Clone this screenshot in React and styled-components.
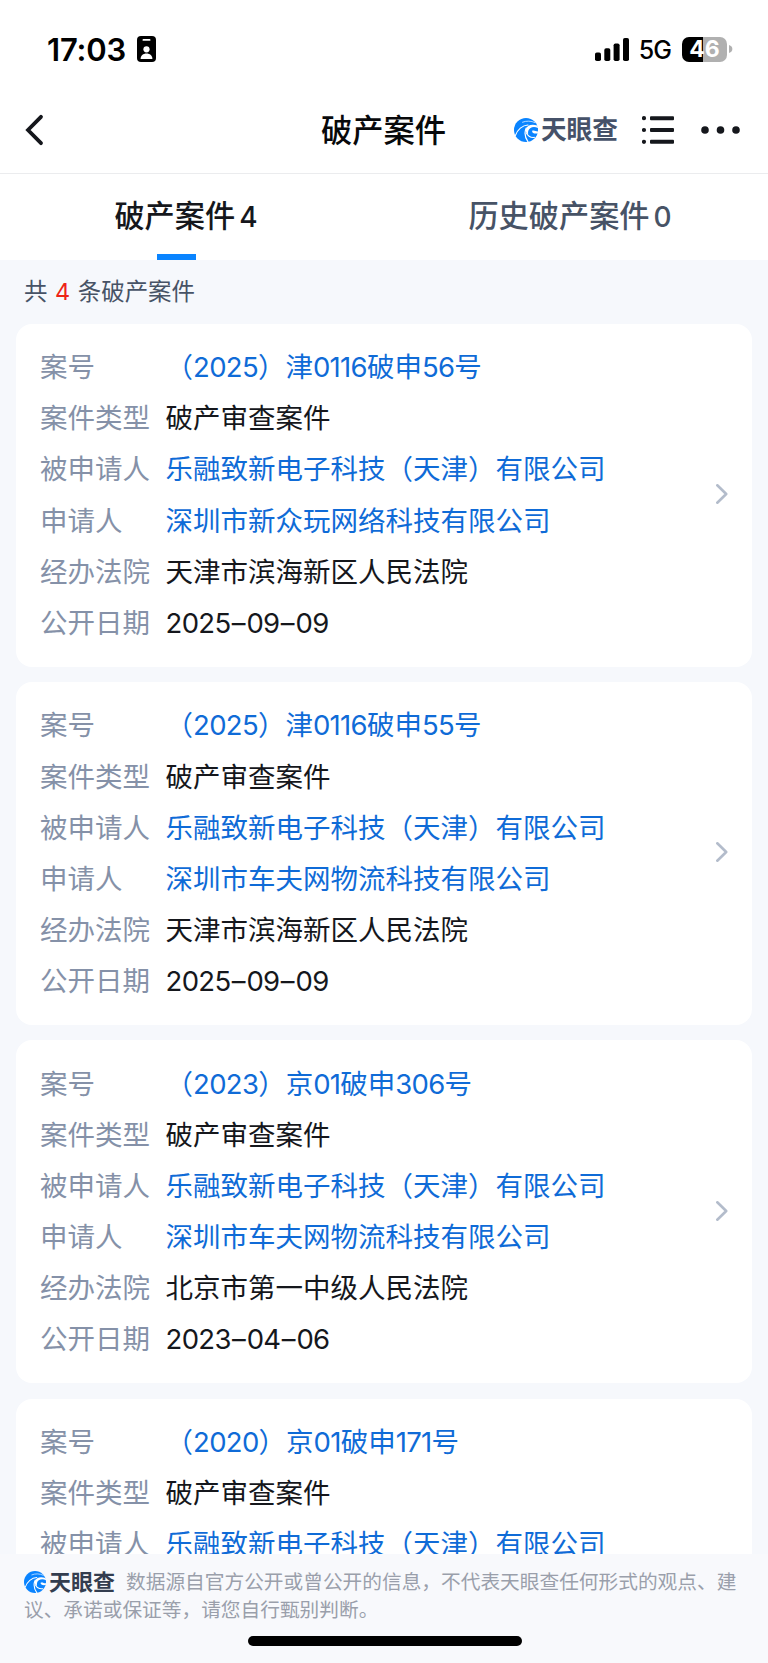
import React from "react";
import styled, { createGlobalStyle } from "styled-components";

const CASES = [
  {
    no: "（2025）津0116破申56号",
    applicant: "深圳市新众玩网络科技有限公司",
    court: "天津市滨海新区人民法院",
    date: "2025–09–09",
  },
  {
    no: "（2025）津0116破申55号",
    applicant: "深圳市车夫网物流科技有限公司",
    court: "天津市滨海新区人民法院",
    date: "2025–09–09",
  },
  {
    no: "（2023）京01破申306号",
    applicant: "深圳市车夫网物流科技有限公司",
    court: "北京市第一中级人民法院",
    date: "2023–04–06",
  },
  {
    no: "（2020）京01破申171号",
  },
];

// digits are set tighter than the Chinese glyphs around them
function Mixed({ text }) {
  return text
    .split(/([0-9]+|–)/)
    .filter(Boolean)
    .map((part, i) => {
      if (part === "–") return <Dash key={i}>{part}</Dash>;
      if (/[0-9]/.test(part)) return <Digits key={i}>{part}</Digits>;
      return <span key={i}>{part}</span>;
    });
}

function LogoMark({ size }) {
  return (
    <svg width={size} height={size} viewBox="0 0 24 24">
      <circle cx="12" cy="12" r="12" fill="#0a84ff" />
      <g fill="none" stroke="#fff" strokeLinecap="round">
        <path d="M8.5 4.2C12.5 2.6 17 2.8 21 4.6" strokeWidth="0.7" />
        <path d="M1.4 17.5C3.4 11.6 8.4 7.2 14 7" strokeWidth="1.1" />
        <path d="M12.2 10C10.2 14.4 11 19.4 14 23.8" strokeWidth="1.2" />
        <path d="M12.4 15C13.8 18 17 19.8 20.4 19.4" strokeWidth="1.1" />
      </g>
      <path d="M11.8 11C13.4 7 18 5.8 23.4 7.6L24.2 10.2C21.4 8.6 18.4 8.6 16.2 10.2C14.2 11.6 13.8 14 14.2 16.4C12 15 11.2 13 11.8 11Z" fill="#fff" />
      <path d="M24.4 13.4C21.6 13.4 20.4 12 18.4 12.6C17.4 14.4 19.4 16 23.6 15.4Z" fill="#fff" />
    </svg>
  );
}

function StatusBar() {
  return (
    <Status>
      <Clock>
        17:03
        <svg width="19" height="26" viewBox="0 0 19 26">
          <rect width="19" height="26" rx="4" fill="#000" />
          <rect x="5.5" y="3" width="8" height="1.8" rx="0.9" fill="#fff" />
          <circle cx="9.5" cy="13.3" r="3.1" fill="#fff" />
          <path d="M3.6 23C3.6 19.7 6 17.6 9.5 17.6S15.4 19.7 15.4 23Z" fill="#fff" />
        </svg>
      </Clock>
      <Signals>
        <svg width="34" height="23" viewBox="0 0 34 23">
          <rect x="0" y="14.5" width="6" height="8.5" rx="1.8" />
          <rect x="9.3" y="10.3" width="6" height="12.7" rx="1.8" />
          <rect x="18.6" y="5.4" width="6" height="17.6" rx="1.8" />
          <rect x="28" y="0" width="6" height="23" rx="1.8" />
        </svg>
        <Network>5G</Network>
        <Battery>46</Battery>
        <svg width="4" height="8" viewBox="0 0 4 8">
          <path d="M0 0C4.5 1.2 4.5 6.8 0 8Z" fill="#b0b0b0" />
        </svg>
      </Signals>
    </Status>
  );
}

function CaseCard({ item }) {
  return (
    <Card>
      <Fields>
        <Label>案号</Label>
        <Value $link><Mixed text={item.no} /></Value>
        <Label>案件类型</Label>
        <Value>破产审查案件</Value>
        <Label>被申请人</Label>
        <Value $link>乐融致新电子科技（天津）有限公司</Value>
        {item.applicant && (
          <>
            <Label>申请人</Label>
            <Value $link>{item.applicant}</Value>
            <Label>经办法院</Label>
            <Value>{item.court}</Value>
            <Label>公开日期</Label>
            <Value><Mixed text={item.date} /></Value>
          </>
        )}
      </Fields>
      <Arrow width="12" height="20" viewBox="0 0 12 20">
        <path d="M1.3 1.3L10.2 10L1.3 18.7" fill="none" stroke="#b3bccb" strokeWidth="2.6" strokeLinecap="round" strokeLinejoin="round" />
      </Arrow>
    </Card>
  );
}

export default function App() {
  return (
    <Screen>
      <GlobalStyle />
      <StatusBar />
      <NavBar>
        <svg width="20" height="32" viewBox="0 0 20 32">
          <path d="M17 2.8L4 16L17 29.2" fill="none" stroke="#15171c" strokeWidth="3.8" strokeLinecap="round" />
        </svg>
        <Title>破产案件</Title>
        <NavActions>
          <LogoMark size={24} />
          <Brand>天眼查</Brand>
          <svg width="32" height="28" viewBox="0 0 32 28" fill="#15171c">
            <circle cx="2" cy="2.2" r="2.1" />
            <circle cx="2" cy="14" r="2.1" />
            <circle cx="2" cy="25.8" r="2.1" />
            <rect x="8" y="0.2" width="24" height="4" rx="1" />
            <rect x="8" y="12" width="24" height="4" rx="1" />
            <rect x="8" y="23.8" width="24" height="4" rx="1" />
          </svg>
          <More width="39" height="8" viewBox="0 0 39 8" fill="#15171c">
            <circle cx="4" cy="4" r="3.8" />
            <circle cx="19.5" cy="4" r="3.8" />
            <circle cx="35" cy="4" r="3.8" />
          </More>
        </NavActions>
      </NavBar>
      <Tabs>
        <Tab $active>
          <TabText>破产案件<Count>4</Count></TabText>
        </Tab>
        <Tab>
          <TabText>历史破产案件<Count>0</Count></TabText>
        </Tab>
      </Tabs>
      <Summary>
        共 <em>4</em> 条破产案件
      </Summary>
      <List>
        {CASES.map((item) => (
          <CaseCard key={item.no} item={item} />
        ))}
      </List>
      <Footer>
        <FooterLogo>
          <LogoMark size={22} />
          <Brand $small>天眼查</Brand>
        </FooterLogo>
        数据源自官方公开或曾公开的信息，不代表天眼查任何形式的观点、建议、承诺或保证等，请您自行甄别判断。
        <HomeBar />
      </Footer>
    </Screen>
  );
}


// Styled Components

const GlobalStyle = createGlobalStyle`
  * {
    box-sizing: border-box;
  }
  body {
    margin: 0;
    font-family: Inter, "Noto Sans CJK SC", sans-serif;
  }
  svg {
    display: block;
    flex-shrink: 0;
  }
`;

const Screen = styled.div`
  display: flex;
  flex-direction: column;
  width: 768px;
  height: 1663px;
  overflow: hidden;
  background: #f6f8fc;
`;

const Status = styled.div`
  display: flex;
  justify-content: space-between;
  align-items: center;
  flex-shrink: 0;
  height: 98px;
  padding: 0 35px 0 47px;
  background: #fff;
`;

const Clock = styled.div`
  display: flex;
  align-items: center;
  gap: 11px;
  font-size: 31px;
  font-weight: 600;
  letter-spacing: -0.2px;
`;

const Signals = styled.div`
  display: flex;
  align-items: center;
`;

const Network = styled.span`
  margin: 2px 11px 0 10px;
  font-size: 25px;
  font-weight: 500;
  letter-spacing: -1px;
`;

const Battery = styled.span`
  width: 45px;
  height: 25px;
  margin-right: 2px;
  border-radius: 7px;
  background: linear-gradient(90deg, #000 46%, #b0b0b0 46%);
  color: #fff;
  font-size: 23px;
  font-weight: 700;
  line-height: 25px;
  text-align: center;
`;

const NavBar = styled.div`
  display: grid;
  grid-template-columns: 1fr auto 1fr;
  align-items: center;
  flex-shrink: 0;
  height: 76px;
  padding: 0 28px 11px 24px;
  border-bottom: 1px solid #ebecee;
  background: #fff;
`;

const Title = styled.div`
  margin-top: -4px;
  padding-left: 3px;
  color: #08090b;
  font-size: 31.3px;
  font-weight: 500;
`;

const NavActions = styled.div`
  display: flex;
  align-items: center;
  justify-content: flex-end;
`;

const Brand = styled.span`
  margin: 0 ${(p) => (p.$small ? "0" : "24px")} 0 ${(p) => (p.$small ? "3px" : "3px")};
  color: ${(p) => (p.$small ? "#333d4f" : "#465269")};
  font-size: ${(p) => (p.$small ? "22px" : "25.7px")};
  font-weight: 700;
  line-height: 24px;
`;

const More = styled.svg`
  margin-left: 27px;
`;

const Tabs = styled.div`
  display: grid;
  grid-template-columns: 1fr 1fr;
  flex-shrink: 0;
  height: 86px;
  background: #fff;
`;

const Tab = styled.div`
  display: flex;
  flex-direction: column;
  align-items: center;
  padding-right: 12px;
  color: ${(p) => (p.$active ? "#15171c" : "#475366")};

  &::after {
    content: "";
    width: 39px;
    height: 6px;
    margin-right: 19px;
    background: ${(p) => (p.$active ? "#0a84ff" : "transparent")};
  }
`;

const TabText = styled.div`
  height: 80px;
  padding-top: 2px;
  font-size: 30.2px;
  font-weight: 500;
  line-height: 80px;
`;

const Count = styled.span`
  margin-left: 4px;
  font-size: 28px;
  font-weight: 500;
`;

const Summary = styled.div`
  flex-shrink: 0;
  height: 64px;
  padding-left: 24px;
  color: #475366;
  font-size: 23.45px;
  line-height: 64px;

  em {
    margin: 0 1px;
    color: #ee2417;
    font-style: normal;
  }
`;

const List = styled.div`
  display: flex;
  flex: 1;
  flex-direction: column;
  gap: 15.6px;
  min-height: 0;
  padding: 0 16px;
  overflow: hidden;
`;

const Card = styled.div`
  display: flex;
  align-items: center;
  justify-content: space-between;
  flex-shrink: 0;
  height: 342.6px;
  padding: 0 24px;
  border-radius: 16px;
  background: #fff;
`;

const Fields = styled.div`
  display: grid;
  align-self: flex-start;
  grid-template-columns: 125.6px auto;
  grid-auto-rows: 51.15px;
  margin-top: 18.2px;
  font-size: 27.5px;
  line-height: 51px;
  white-space: nowrap;
`;

const Arrow = styled.svg`
  margin-bottom: 2px;
`;

const Label = styled.span`
  color: #8591a8;
`;

const Value = styled.span`
  color: ${(p) => (p.$link ? "#0f6bd7" : "#15171c")};
`;

const Digits = styled.span`
  letter-spacing: -0.7px;
`;

const Dash = styled.span`
  margin: 0 0.9px 0 1.4px;
`;

const Footer = styled.div`
  flex-shrink: 0;
  height: 109.5px;
  padding: 14px 20px 0 24px;
  background: #f8f9fc;
  color: #9a9fab;
  font-size: 19.7px;
  line-height: 28px;
`;

const FooterLogo = styled.span`
  display: inline-flex;
  align-items: center;
  margin-right: 11px;
  vertical-align: top;
  height: 28px;
`;

const HomeBar = styled.div`
  width: 274px;
  height: 10px;
  margin: 12px 0 0 223.5px;
  border-radius: 5px;
  background: #000;
`;
